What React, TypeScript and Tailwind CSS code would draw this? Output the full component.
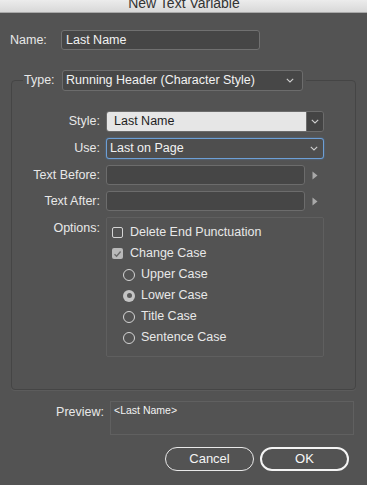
import React from "react";

const Chevron = ({ className = "" }: { className?: string }) => (
  <svg width="8" height="5" viewBox="0 0 8 5" className={className}>
    <path d="M0.8 0.8 L4 4 L7.2 0.8" fill="none" stroke="#cfcfcf" strokeWidth="1.1" />
  </svg>
);

const Arrow = () => (
  <svg width="6" height="9" viewBox="0 0 6 9" className="shrink-0">
    <path d="M0.5 0.5 L5.5 4.5 L0.5 8.5 Z" fill="#a9a9a9" />
  </svg>
);

const Checkbox = ({ checked }: { checked?: boolean }) =>
  checked ? (
    <div className="w-[11px] h-[11px] rounded-[2px] bg-[#b9b9b9] flex items-center justify-center shrink-0">
      <svg width="9" height="8" viewBox="0 0 9 8">
        <path d="M1.5 4.2 L3.6 6.2 L7.6 1.5" fill="none" stroke="#6b6b6b" strokeWidth="1.4" />
      </svg>
    </div>
  ) : (
    <div className="w-[11px] h-[11px] rounded-[2px] border border-[#d4d4d4] shrink-0" />
  );

const Radio = ({ checked }: { checked?: boolean }) =>
  checked ? (
    <div className="w-[12px] h-[12px] rounded-full bg-[#c4c4c4] flex items-center justify-center shrink-0">
      <div className="w-[5px] h-[5px] rounded-full bg-[#5a5a5a]" />
    </div>
  ) : (
    <div className="w-[12px] h-[12px] rounded-full border border-[#d4d4d4] shrink-0" />
  );

export default function App() {
  return (
    <div
      className="w-[367px] h-[485px] bg-[#535353] overflow-hidden flex flex-col text-[12.5px] text-[#e8e8e8]"
      style={{ fontFamily: '"Liberation Sans", Arial, sans-serif' }}
    >
      {/* title bar */}
      <div className="h-[13px] shrink-0 overflow-hidden bg-gradient-to-b from-[#ececec] to-[#d8d8d8] border-b border-[#a9a9a9] flex justify-center">
        <span className="text-[14px] leading-[14px] text-[#333] -mt-[4px] ml-[1px]">New Text Variable</span>
      </div>

      {/* Name row */}
      <div className="flex items-center mt-[17px] pl-[10px] h-[20px]">
        <div className="w-[51px] leading-[15px]">Name:</div>
        <div className="w-[199px] h-[20px] rounded-[3px] bg-[#464646] border border-[#707070] flex items-center pl-[4px] text-[#f2f2f2]">
          Last Name
        </div>
      </div>

      {/* Group */}
      <fieldset className="mx-[11px] mt-[20px] w-[345px] h-[320px] border border-[#454545] rounded-[4px] shadow-[0_1px_0_#5c5c5c]">
        <legend className="ml-[11px] pl-[1px] pr-[3px] flex items-center">
          <span className="w-[38px] leading-[15px]">Type:</span>
          <div className="w-[241px] h-[21px] rounded-[3px] bg-[#474747] border border-[#6c6c6c] flex items-center pl-[3px] pr-[8px] justify-between text-[#f2f2f2]">
            <span>Running Header (Character Style)</span>
            <Chevron />
          </div>
        </legend>

        <div className="flex flex-col gap-[6px] mt-[20px]">
          {/* Style */}
          <div className="flex items-center">
            <div className="w-[88px] text-right leading-[15px]">Style:</div>
            <div className="ml-[6px] w-[218px] h-[21px] flex rounded-[3px] border border-[#6c6c6c] overflow-hidden">
              <div className="flex-1 bg-[#e6e6e6] text-[#1e1e1e] flex items-center pl-[7px]">Last Name</div>
              <div className="w-[17px] bg-[#444444] border-l border-[#6c6c6c] flex items-center justify-center">
                <Chevron />
              </div>
            </div>
          </div>

          {/* Use */}
          <div className="flex items-center">
            <div className="w-[88px] text-right leading-[15px]">Use:</div>
            <div className="ml-[6px] w-[218px] h-[21px] rounded-[3px] bg-[#4e4e4e] border border-[#6d9fd6] shadow-[0_0_1.5px_#4d86c4] flex items-center justify-between pl-[3px] pr-[5px] text-[#f2f2f2]">
              <span>Last on Page</span>
              <Chevron />
            </div>
          </div>

          {/* Text Before */}
          <div className="flex items-center">
            <div className="w-[88px] text-right leading-[15px]">Text Before:</div>
            <div className="ml-[6px] w-[199px] h-[20px] rounded-[3px] bg-[#464646] border border-[#6c6c6c]" />
            <div className="ml-[7px]">
              <Arrow />
            </div>
          </div>

          {/* Text After */}
          <div className="flex items-center">
            <div className="w-[88px] text-right leading-[15px]">Text After:</div>
            <div className="ml-[6px] w-[199px] h-[20px] rounded-[3px] bg-[#464646] border border-[#6c6c6c]" />
            <div className="ml-[7px]">
              <Arrow />
            </div>
          </div>

          {/* Options */}
          <div className="flex items-start">
            <div className="w-[88px] text-right leading-[15px] pt-[4px]">Options:</div>
            <div className="ml-[6px] w-[218px] h-[140px] border border-[#5f5f5f] rounded-[2px] pt-[4px] flex flex-col">
              <div className="h-[21px] flex items-center pl-[5px] gap-[7px]">
                <Checkbox />
                <span>Delete End Punctuation</span>
              </div>
              <div className="h-[21px] flex items-center pl-[5px] gap-[7px]">
                <Checkbox checked />
                <span>Change Case</span>
              </div>
              {[
                ["Upper Case", false],
                ["Lower Case", true],
                ["Title Case", false],
                ["Sentence Case", false],
              ].map(([label, on]) => (
                <div key={label as string} className="h-[21px] flex items-center pl-[16px] gap-[6px]">
                  <Radio checked={on as boolean} />
                  <span>{label as string}</span>
                </div>
              ))}
            </div>
          </div>
        </div>
      </fieldset>

      {/* Preview */}
      <div className="flex items-start mt-[11px]">
        <div className="w-[104px] text-right leading-[15px] pt-[4px]">Preview:</div>
        <div className="ml-[6px] w-[244px] h-[34px] border border-[#606060] pl-[3px] pt-[2px] text-[10.5px] leading-[12px] text-[#f2f2f2]">
          &lt;Last Name&gt;
        </div>
      </div>

      {/* Buttons */}
      <div className="flex justify-end gap-[6px] mt-[12px] pr-[18px]">
        <button className="w-[89px] h-[24px] rounded-full border-[1.5px] border-[#e9e9e9] text-[#f4f4f4] text-[13px] flex items-center justify-center">
          Cancel
        </button>
        <button className="w-[89px] h-[24px] rounded-full border-2 border-[#f4f4f4] text-[#f8f8f8] text-[13px] flex items-center justify-center">
          OK
        </button>
      </div>
    </div>
  );
}
